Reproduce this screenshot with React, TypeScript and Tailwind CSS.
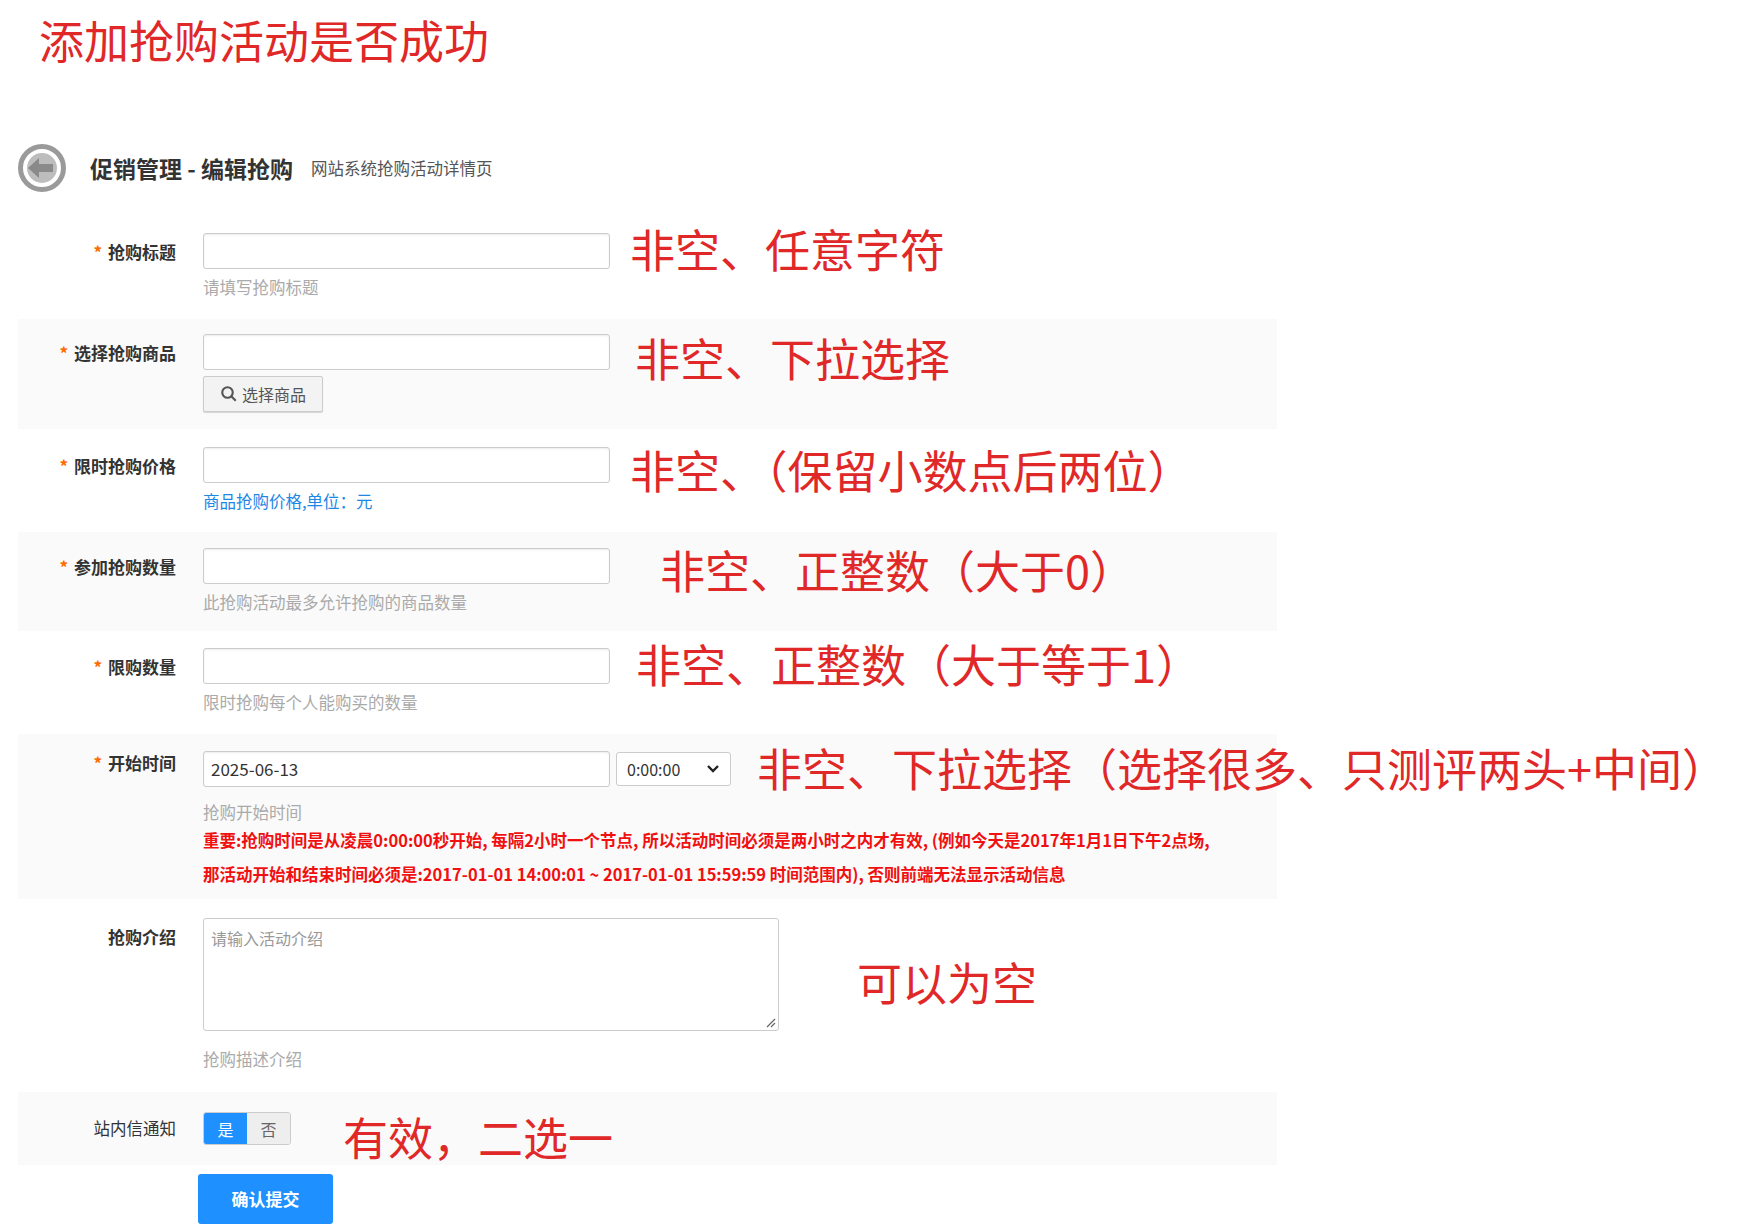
import React from "react";

const F = { fontFamily: '"Noto Sans CJK SC", "Noto Sans", sans-serif' };

function Label({ text, req = true }: { text: string; req?: boolean }) {
  return (
    <div className="w-[158px] shrink-0 text-right pt-[6px] text-[17px] font-bold text-[#333]">
      {req && <span className="text-[#ff6a00] mr-[6px]">*</span>}
      {text}
    </div>
  );
}

function Note({ text, ml }: { text: string; ml: string }) {
  return <div className={`text-[45px] leading-[52px] text-[#e02828] whitespace-nowrap ${ml}`}>{text}</div>;
}

const inputCls = "w-[407px] h-[36px] border border-[#ccc] rounded-[3px] bg-white shadow-[inset_0_1px_2px_rgba(0,0,0,0.08)]";

export default function App() {
  return (
    <div style={F} className="w-[1750px] h-[1231px] bg-white relative overflow-hidden">
      <div className="pl-[39px] pt-[12px] text-[45px] leading-[56px] text-[#e02828]">添加抢购活动是否成功</div>
      <div className="flex items-center mt-[75px] pl-[17px] h-[50px]">
        <svg width="50" height="50" viewBox="0 0 50 50">
          <circle cx="25" cy="25" r="21.5" fill="none" stroke="#9a9a9a" strokeWidth="5" />
          <circle cx="25" cy="25" r="15" fill="#bdbdbd" />
          <path d="M11 25 L22 15 L22 21 L36 21 L36 29 L22 29 L22 35 Z" fill="#8a8a8a" />
        </svg>
        <span className="ml-[23px] text-[23px] font-bold text-[#333]">促销管理 - 编辑抢购</span>
        <span className="ml-[18px] text-[16.5px] text-[#555]">网站系统抢购活动详情页</span>
      </div>
      <div className="mt-[16px] w-[1259px] ml-[18px]">
        <div className="h-[110px] flex pt-[24px]">
          <Label text="抢购标题" />
          <div className="ml-[27px]">
            <div className={inputCls} />
            <div className="mt-[6px] text-[16.5px] text-[#aaa]">请填写抢购标题</div>
          </div>
          <Note text="非空、任意字符" ml="ml-[20px] -mt-[10px]" />
        </div>
        <div className="h-[110px] flex pt-[15px] bg-[#fafafa]">
          <Label text="选择抢购商品" />
          <div className="ml-[27px]">
            <div className={inputCls} />
            <div className="mt-[6px] w-[120px] h-[36px] border border-[#ccc] rounded-[2px] bg-[#f3f3f3] flex items-center justify-center gap-[4px] text-[16px] text-[#555] shadow-[0_1px_1px_rgba(0,0,0,0.15)]">
              <svg width="18" height="18" viewBox="0 0 24 24" fill="none" stroke="#555" strokeWidth="2.8"><circle cx="10" cy="10" r="7" /><path d="M15 15l6 6" /></svg>
              选择商品
            </div>
          </div>
          <Note text="非空、下拉选择" ml="ml-[25px] -mt-[2px]" />
        </div>
        <div className="h-[103px] flex pt-[18px]">
          <Label text="限时抢购价格" />
          <div className="ml-[27px]">
            <div className={inputCls} />
            <div className="mt-[6px] text-[16.5px] text-[#1e88e5]">商品抢购价格,单位：元</div>
          </div>
          <Note text="非空、（保留小数点后两位）" ml="ml-[20px] -mt-[3px]" />
        </div>
        <div className="h-[99px] flex pt-[16px] bg-[#fafafa]">
          <Label text="参加抢购数量" />
          <div className="ml-[27px]">
            <div className={inputCls} />
            <div className="mt-[6px] text-[16.5px] text-[#aaa]">此抢购活动最多允许抢购的商品数量</div>
          </div>
          <Note text="非空、正整数（大于0）" ml="ml-[50px] -mt-[4px]" />
        </div>
        <div className="h-[103px] flex pt-[17px]">
          <Label text="限购数量" />
          <div className="ml-[27px]">
            <div className={inputCls} />
            <div className="mt-[6px] text-[16.5px] text-[#aaa]">限时抢购每个人能购买的数量</div>
          </div>
          <Note text="非空、正整数（大于等于1）" ml="ml-[26px] -mt-[10px]" />
        </div>
        <div className="h-[165px] flex pt-[10px] bg-[#fafafa]">
          <Label text="开始时间" />
          <div className="ml-[27px]">
            <div className="flex items-center">
              <div className={`${inputCls} flex items-center pl-[7px] text-[17px] text-[#333]`}>2025-06-13</div>
              <div className="ml-[6px] w-[115px] h-[34px] border border-[#ccc] rounded-[3px] bg-white flex items-center justify-between px-[10px] text-[16px] text-[#333]">
                0:00:00
                <svg width="14" height="10" viewBox="0 0 14 10" fill="none" stroke="#222" strokeWidth="2.4"><path d="M2 2l5 5 5-5" /></svg>
              </div>
              <Note text="非空、下拉选择（选择很多、只测评两头+中间）" ml="ml-[26px] -mt-[2px]" />
            </div>
            <div className="mt-[6px] text-[16.5px] text-[#aaa]">抢购开始时间</div>
            <div className="-mt-[2px] text-[16.5px] leading-[34px] font-bold text-[#f01010] whitespace-nowrap">
              重要:抢购时间是从凌晨0:00:00秒开始, 每隔2小时一个节点, 所以活动时间必须是两小时之内才有效, (例如今天是2017年1月1日下午2点场,
              <br />
              那活动开始和结束时间必须是:2017-01-01 14:00:01 ~ 2017-01-01 15:59:59 时间范围内), 否则前端无法显示活动信息
            </div>
          </div>
        </div>
        <div className="h-[193px] flex pt-[19px]">
          <Label text="抢购介绍" req={false} />
          <div className="ml-[27px]">
            <div className="w-[576px] h-[113px] border border-[#ccc] rounded-[3px] bg-white relative p-[7px] text-[16px] text-[#999]">
              请输入活动介绍
              <svg className="absolute right-[2px] bottom-[2px]" width="12" height="12" viewBox="0 0 12 12" stroke="#666" strokeWidth="1.2"><path d="M11 3L3 11M11 7L7 11" /></svg>
            </div>
            <div className="mt-[16px] text-[16.5px] text-[#aaa]">抢购描述介绍</div>
          </div>
          <Note text="可以为空" ml="ml-[78px] mt-[38px]" />
        </div>
        <div className="h-[73px] flex items-center bg-[#fafafa]">
          <div className="w-[158px] text-right text-[16.5px] text-[#333]">站内信通知</div>
          <div className="ml-[27px] flex h-[33px] rounded-[3px] overflow-hidden border border-[#ccc]">
            <div className="w-[43px] bg-[#1e90ff] text-white flex items-center justify-center text-[16px]">是</div>
            <div className="w-[43px] bg-[#eee] text-[#666] flex items-center justify-center text-[16px]">否</div>
          </div>
          <Note text="有效，二选一" ml="ml-[52px] mt-[16px]" />
        </div>
        <div className="mt-[9px] ml-[180px] w-[135px] h-[50px] bg-[#1e90ff] rounded-[3px] flex items-center justify-center text-white font-bold text-[17px]">确认提交</div>
      </div>
    </div>
  );
}
